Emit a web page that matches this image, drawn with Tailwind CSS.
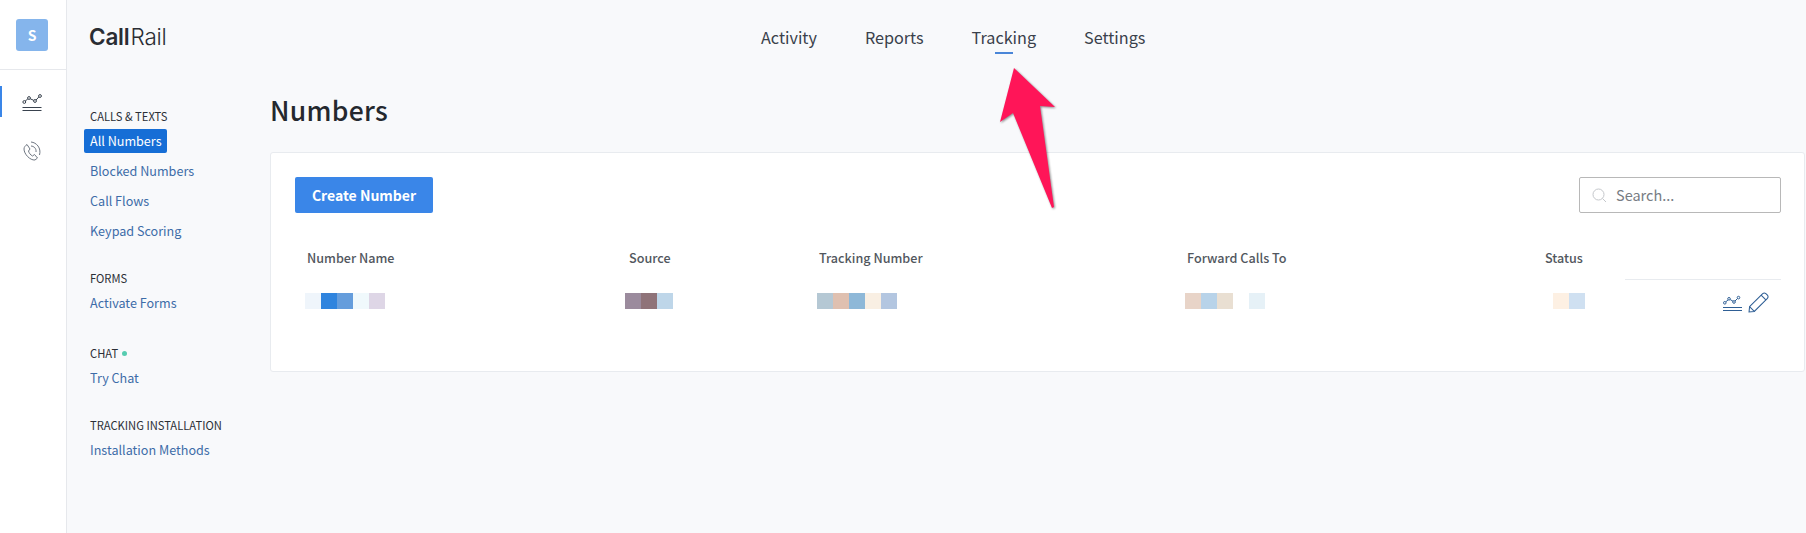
<!DOCTYPE html>
<html lang="en">
  <head>
    <meta charset="UTF-8" />
    <meta name="viewport" content="width=device-width, initial-scale=1.0" />
    <title>Numbers</title>
    <script src="https://cdn.jsdelivr.net/npm/@tailwindcss/browser@4"></script>
  </head>
  <body class="relative h-[533px] overflow-hidden bg-[#f8f9fb] font-['Noto_Sans_CJK_SC','Noto_Sans',sans-serif] text-[#2b2f36]">
    <div class="flex h-[533px]">
      <!-- Icon rail -->
      <aside class="w-[67px] shrink-0 bg-white border-r border-[#e6e8ec]">
        <div class="h-[70px] border-b border-[#e6e8ec] pt-[19px] pl-[16px]">
          <div class="w-[32px] h-[32px] rounded-[3px] bg-[#85b5ec] flex items-center justify-center text-white text-[14px] font-bold">S</div>
        </div>
        <div class="relative pt-[16px]">
          <div class="w-[2px] h-[31px] bg-[#3a86e8]"></div>
          <svg class="ml-[22px] mt-[-25px] w-[20px] h-[20px] text-[#39424e]" viewBox="0 0 20 20" fill="none" stroke="currentColor" stroke-width="1">
            <path d="M3.2 9 L5.8 7 M8.2 6.8 L11.7 8.3 M14.1 8 L16.8 5" />
            <circle cx="2.3" cy="10" r="1.4" /><circle cx="7" cy="6" r="1.4" /><circle cx="13" cy="9" r="1.4" /><circle cx="18" cy="4" r="1.4" />
            <path d="M0.5 15.5 H19.5 M0.5 18.5 H19.5" />
          </svg>
          <svg class="ml-[22px] mt-[29px] w-[20px] h-[20px] text-[#6f7782]" viewBox="0 0 20 20" fill="none" stroke="currentColor" stroke-width="1">
            <path d="M5 3.5 L8 8 L6.5 10 C7 12 8.5 14 10.5 15 L12.5 13.5 L15.5 17 L13 19 C8 19.5 2 13 2 8 C2 6 3.5 4.5 5 3.5 Z" />
            <path d="M9 1 C14.5 1.5 19.5 7 17.5 14" />
            <path d="M9 5 C12 5.2 14.5 7.5 14 11" />
          </svg>
        </div>
      </aside>

      <div class="flex-1 min-w-0">
        <!-- Top bar -->
        <header class="h-[74px] flex items-start">
          <div class="w-[694px] pl-[22px] pt-[22px] font-['Inter',sans-serif] text-[22.5px] leading-[30px] tracking-[-0.2px] text-[#2a2d33] flex">
            <span class="font-semibold">Call</span><span class="font-light ml-[1px]">Rail</span>
          </div>
          <nav class="flex gap-[48px] pt-[24px] text-[16.2px] leading-[26px] text-[#3a414b]">
            <a>Activity</a>
            <a>Reports</a>
            <a class="relative">Tracking<span class="absolute left-[23px] top-[28px] w-[18px] h-[2px] bg-[#4a86d8]"></span></a>
            <a>Settings</a>
          </nav>
        </header>

        <div class="flex">
          <!-- Section nav -->
          <nav class="w-[204px] shrink-0 pl-[23px] pt-[34px] text-[12.6px] leading-[20px] text-[#3d6ca8]">
            <h3 class="text-[11.2px] leading-[16px] text-[#2b2f36]">CALLS &amp; TEXTS</h3>
            <a class="inline-block mt-[5px] -ml-[6px] pl-[6px] pr-[5px] h-[24px] leading-[24px] rounded-[2px] bg-[#166ed6] text-white">All Numbers</a>
            <a class="block mt-[8px]">Blocked Numbers</a>
            <a class="block mt-[10px]">Call Flows</a>
            <a class="block mt-[10px]">Keypad Scoring</a>
            <h3 class="mt-[29px] text-[11.2px] leading-[16px] text-[#2b2f36]">FORMS</h3>
            <a class="block mt-[7px]">Activate Forms</a>
            <h3 class="mt-[32px] text-[11.2px] leading-[16px] text-[#2b2f36] flex items-center gap-[4px]">CHAT <span class="w-[5px] h-[5px] rounded-full bg-[#56ccb0]"></span></h3>
            <a class="block mt-[7px]">Try Chat</a>
            <h3 class="mt-[29px] text-[11.2px] leading-[16px] text-[#2b2f36]">TRACKING INSTALLATION</h3>
            <a class="block mt-[7px]">Installation Methods</a>
          </nav>

          <main class="flex-1 min-w-0 -ml-[1px]">
            <h1 class="text-[26.5px] leading-[38px] font-medium tracking-[0.3px] text-[#24282e] mt-[17px] mb-[23px]">Numbers</h1>
            <section class="h-[220px] mr-[1px] bg-white border border-[#e8ebef] rounded-[3px] pl-[24px] pr-[23px] pt-[24px]">
              <div class="flex justify-between">
                <button class="w-[138px] h-[36px] rounded-[2px] bg-[#3a86e8] text-white text-[14px] font-bold">Create Number</button>
                <div class="w-[202px] h-[36px] border border-[#b8b8b8] rounded-[2px] flex items-center pl-[12px] gap-[9px] text-[14.5px] text-[#777c83]">
                  <svg class="w-[15px] h-[15px] text-[#c4c7cb]" viewBox="0 0 15 15" fill="none" stroke="currentColor" stroke-width="1"><circle cx="6.5" cy="6.5" r="5.5" /><path d="M10.5 10.5 L14 14" /></svg>
                  <span>Search...</span>
                </div>
              </div>
              <!-- Number table -->
              <div class="grid grid-cols-[322px_190px_368px_358px_92px_156px] mt-[35px] text-[12.6px] leading-[20px] font-medium text-[#52575e]">
                <div class="pl-[12px]">Number Name</div>
                <div class="pl-[12px]">Source</div>
                <div class="pl-[12px]">Tracking Number</div>
                <div class="pl-[12px]">Forward Calls To</div>
                <div class="pl-[12px]">Status</div>
                <div class="h-[32px] border-b border-[#e8ebef]"></div>

                <div class="flex pl-[10px] mt-[13px] h-[16px]">
                  <i class="w-[16px] bg-[#eff5fb]"></i><i class="w-[16px] bg-[#2f84de]"></i><i class="w-[16px] bg-[#659ddc]"></i><i class="w-[16px] bg-[#f0f9fc]"></i><i class="w-[16px] bg-[#ded6e6]"></i>
                </div>
                <div class="flex pl-[8px] mt-[13px] h-[16px]">
                  <i class="w-[16px] bg-[#9b8b9d]"></i><i class="w-[16px] bg-[#8f7379]"></i><i class="w-[16px] bg-[#bed6e9]"></i>
                </div>
                <div class="flex pl-[10px] mt-[13px] h-[16px]">
                  <i class="w-[16px] bg-[#b5c8d4]"></i><i class="w-[16px] bg-[#dfc0b0]"></i><i class="w-[16px] bg-[#8eb8d8]"></i><i class="w-[16px] bg-[#f9efe3]"></i><i class="w-[16px] bg-[#b3c6e0]"></i>
                </div>
                <div class="flex pl-[10px] mt-[13px] h-[16px]">
                  <i class="w-[16px] bg-[#e8d4c8]"></i><i class="w-[16px] bg-[#b8d3e9]"></i><i class="w-[16px] bg-[#e9dfd2]"></i><i class="w-[16px]"></i><i class="w-[16px] bg-[#e6f1f7]"></i>
                </div>
                <div class="flex pl-[20px] mt-[13px] h-[16px]">
                  <i class="w-[16px] bg-[#fdf0e3]"></i><i class="w-[16px] bg-[#cfe0f1]"></i>
                </div>
                <div class="flex justify-end items-start gap-[6px] pr-[12px] mt-[12px] text-[#2f5f95]">
                  <svg class="w-[19px] h-[20px] mt-[1px]" viewBox="0 0 19 20" fill="none" stroke="currentColor" stroke-width="1">
                    <path d="M2.8 8.8 L5 7 M7.2 6.6 L10 8.2 M12 8 L14.5 5.5" />
                    <circle cx="1.8" cy="9.8" r="1.3" /><circle cx="6" cy="5.8" r="1.3" /><circle cx="11" cy="9" r="1.3" /><circle cx="15.5" cy="4.6" r="1.3" />
                    <path d="M0 14.5 H19 M0 17.5 H19" />
                  </svg>
                  <svg class="w-[21px] h-[21px]" viewBox="0 0 20 20" fill="none" stroke="currentColor" stroke-width="1">
                    <path d="M1.5 14 L14 1.5 C15 0.7 16 0.7 17 1.5 L18.5 3 C19.3 4 19.3 5 18.5 6 L6 18.5 L1 19 Z" />
                    <path d="M12.5 3 L17 7.5 M1.5 14 L6 18.5" />
                  </svg>
                </div>
              </div>
            </section>
          </main>
        </div>
      </div>
    </div>

    <!-- Annotation arrow -->
    <svg class="absolute left-[990px] top-[60px] w-[80px] h-[160px] drop-shadow-[1px_1px_1px_rgba(0,0,0,0.45)]" viewBox="990 60 80 160">
      <path d="M1014 68 L1055 107 L1040 106 L1054 207 L1052 208 L1013 113 L1000 122 Z" fill="#ff1558" />
    </svg>
  </body>
</html>
